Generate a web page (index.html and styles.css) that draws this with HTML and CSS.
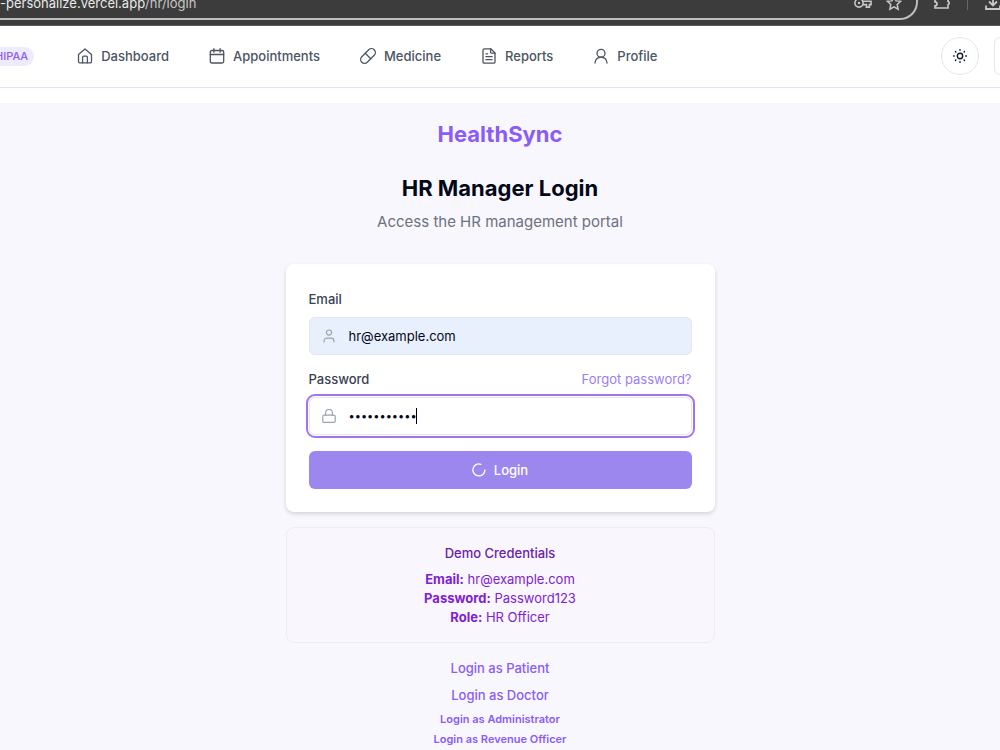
FILE: index.html
```html
<!DOCTYPE html>
<html lang="en">
<head>
  <meta charset="UTF-8" />
  <meta name="viewport" content="width=device-width, initial-scale=1.0" />
  <title>HealthSync - HR Manager Login</title>
  <link rel="stylesheet" href="styles.css">
</head>
<body>
  <!-- browser toolbar -->
  <div class="browser-bar">
    <div class="address">
      <span class="url"><b>-personalize.vercel.app</b>/hr/login</span>
      <span class="address-icons">
        <svg width="18" height="18" viewBox="0 0 18 18" fill="none" stroke="#c7c7c7" stroke-width="1.6"><circle cx="5" cy="9" r="4.1"/><circle cx="5" cy="9" r="1.2" fill="#c7c7c7" stroke="none"/><path d="M8.6 7.2h8.4v3.4h-1.600v2.500h-3v-2.500H8.800"/></svg>
        <svg width="16" height="16" viewBox="0 0 16 16" fill="none" stroke="#c7c7c7" stroke-width="1.500"><path d="M8 1.500l2 4.300 4.600.5-3.400 3.200.9 4.700L8 11.900l-4.100 2.300.9-4.700L1.400 6.300 6 5.800z"/></svg>
      </span>
    </div>
    <div class="browser-tools">
      <svg width="18" height="18" viewBox="0 0 18 18" fill="none" stroke="#c7c7c7" stroke-width="1.700"><path d="M2 4h4.200a1.700 1.700 0 0 1 3.400 0H15v3.400a1.800 1.800 0 0 1 0 3.400V14H2v-2.200a2 2 0 0 0 0-4z"/></svg>
      <span class="divider"></span>
      <svg width="18" height="18" viewBox="0 0 18 18" fill="none" stroke="#c7c7c7" stroke-width="1.800"><path d="M9 1v10M5 7.500l4 4 4-4M2 11.500V15h14v-3.500"/></svg>
    </div>
  </div>

  <header class="header">
    <span class="badge">HIPAA</span>
    <nav class="nav">
      <a href="#">
        <svg class="icon" viewBox="0 0 16 16"><path d="M1.500 6.500L8 1l6.500 5.500V13.500a1.300 1.300 0 0 1-1.300 1.300H2.800a1.300 1.300 0 0 1-1.300-1.300z"/><path d="M5.600 14.800V9.200a1 1 0 0 1 1-1h2.800a1 1 0 0 1 1 1v5.600"/></svg>
        Dashboard
      </a>
      <a href="#">
        <svg class="icon" viewBox="0 0 16 16"><rect x="1.300" y="2.500" width="13.400" height="12.500" rx="1.500"/><path d="M4.900.6v3.600M11.100.6v3.600M1.300 6.500h13.400"/></svg>
        Appointments
      </a>
      <a href="#">
        <svg class="icon" viewBox="0 0 16 16"><g transform="rotate(-45 8 8)"><rect x="-.8" y="4.100" width="17.600" height="7.800" rx="3.900"/><path d="M8 4.100v7.800"/></g></svg>
        Medicine
      </a>
      <a href="#">
        <svg class="icon" viewBox="0 0 16 16"><path d="M9.800.8H3.300A1.300 1.300 0 0 0 2 2.100v11.800a1.300 1.300 0 0 0 1.300 1.300h9.400a1.300 1.300 0 0 0 1.300-1.300V5z"/><path d="M9.600.8v3.200a1.200 1.200 0 0 0 1.200 1.200H14M4.900 5.800h1.700M4.900 8.700h6.200M4.900 11.600h6.200"/></svg>
        Reports
      </a>
      <a href="#">
        <svg class="icon" viewBox="0 0 16 16"><circle cx="8" cy="5.300" r="4"/><path d="M2 15a6 6 0 0 1 12 0"/></svg>
        Profile
      </a>
    </nav>
    <div class="header-actions">
      <button class="theme-toggle" type="button" aria-label="Toggle theme">
        <svg width="16" height="16" viewBox="0 0 16 16" fill="none" stroke="#111827" stroke-width="1.400" stroke-linecap="round"><circle cx="8" cy="8" r="2.700"/><path d="M8 1.600v.6M8 13.800v.6M1.600 8h.6M13.800 8h.6M3.500 3.500l.4.4M12.100 12.100l.4.4M3.500 12.500l.4-.4M12.100 3.900l.4-.4"/></svg>
      </button>
      <button class="menu-button" type="button" aria-label="Open menu"></button>
    </div>
  </header>

  <main class="page">
    <div class="brand">HealthSync</div>
    <h1>HR Manager Login</h1>
    <p class="subtitle">Access the HR management portal</p>

    <form class="card">
      <div class="label-row">
        <label for="email">Email</label>
      </div>
      <div class="field">
        <svg class="field-icon" viewBox="0 0 14 14"><circle cx="7" cy="3.600" r="2.600"/><path d="M2 13v-.8a3 3 0 0 1 3-3h4a3 3 0 0 1 3 3v.8"/></svg>
        <input class="filled" id="email" type="email" value="hr@example.com">
      </div>
      <div class="label-row">
        <label for="password">Password</label>
        <a href="#">Forgot password?</a>
      </div>
      <div class="field">
        <svg class="field-icon" viewBox="0 0 14 14"><rect x=".8" y="6.200" width="12.400" height="7.200" rx="1.300"/><path d="M3.600 6.200V3.800a3.400 3.400 0 0 1 6.800 0v2.400"/></svg>
        <input class="active" id="password" type="password" value="Password123">
        <span class="caret"></span>
      </div>
      <button class="login" type="button">
        <svg width="14" height="14" viewBox="0 0 14 14" fill="none" stroke="#fff" stroke-width="1.300" stroke-linecap="round"><path d="M12.900 7A6 6 0 1 1 8.900 1.300"/></svg>
        Login
      </button>
    </form>

    <section class="demo">
      <h2>Demo Credentials</h2>
      <p><strong>Email:</strong> hr@example.com</p>
      <p><strong>Password:</strong> Password123</p>
      <p><strong>Role:</strong> HR Officer</p>
    </section>

    <div class="links">
      <a href="#">Login as Patient</a>
      <a href="#">Login as Doctor</a>
      <a class="small" href="#">Login as Administrator</a>
      <a class="small" href="#">Login as Revenue Officer</a>
    </div>
  </main>
</body>
</html>
```
FILE: styles.css
```css
* { box-sizing: border-box; }
html { overflow: hidden; }
body { margin: 0; background: #fff; font-family: Inter, "Liberation Sans", sans-serif; font-size: 13px; color: #030817; }
a { color: inherit; text-decoration: none; }
h1, h2, p { margin: 0; }
button, input { font-family: inherit; }

.browser-bar { display: flex; height: 26px; background: #3c3c3c; border-bottom: 1px solid #5c5c5c; overflow: hidden; }
.address { flex: 1; display: flex; justify-content: space-between; height: 20px; border: solid #b9bec3; border-width: 0 2px 2px 0; border-bottom-right-radius: 18px; }
.url { font-size: 13px; line-height: 6px; color: #c7c7c7; }
.url b { font-weight: 400; color: #e8e8e8; }
.address-icons { display: flex; align-items: center; gap: 14px; height: 6px; padding-right: 14px; }
.browser-tools { display: flex; align-items: center; height: 6px; padding-left: 15px; margin-right: -2px; }
.browser-tools svg { flex: none; }
.divider { width: 1px; height: 14px; margin: 0 16px; background: #666; }

.header { display: flex; align-items: center; height: 62px; padding-bottom: 1px; border-bottom: 1px solid #e2e1f4; overflow: hidden; }
.badge { margin-left: -13px; padding: 0 6px 0 8px; border-radius: 10px; background: #efebfe; color: #8b5cf6; font-size: 11px; font-weight: 500; line-height: 19px; }
.nav { display: flex; gap: 40px; margin-left: 43px; color: #4b5563; font-weight: 500; }
.nav a { display: flex; align-items: center; gap: 8px; }
.icon { width: 16px; height: 16px; fill: none; stroke: #4b5563; stroke-width: 1.3; stroke-linecap: round; stroke-linejoin: round; overflow: visible; }
.header-actions { display: flex; gap: 15px; margin-left: auto; margin-right: -32px; }
.theme-toggle, .menu-button { width: 38px; height: 38px; padding: 0; border: 1px solid #e5e7eb; background: #fff; }
.theme-toggle { display: flex; align-items: center; justify-content: center; border-radius: 50%; }
.menu-button { border-radius: 6px; }

.page { display: flex; flex-direction: column; align-items: center; min-height: 647px; margin-top: 15px; padding: 15px 16px 0; background: #f8f7fe; }
.brand { font-size: 22px; font-weight: 700; line-height: 32px; color: #8b5cf6; }
h1 { margin-top: 22px; font-size: 22px; font-weight: 700; line-height: 32px; }
.subtitle { margin-top: 6px; font-size: 15px; line-height: 24px; color: #6b7280; }

.card { width: 100%; max-width: 429px; margin-top: 30px; padding: 23px; border-radius: 8px; background: #fff; box-shadow: 0 2px 4px rgba(0, 0, 0, .14); }
.label-row { display: flex; justify-content: space-between; margin-bottom: 5px; line-height: 25px; font-weight: 500; color: #374151; }
.label-row a { font-weight: 400; color: #9b7ff0; }
.field { position: relative; margin-bottom: 12px; }
.field input { display: block; width: 100%; height: 38px; padding: 0 12px 0 39px; border: 1px solid #e2e8f0; border-radius: 6px; background: #fff; color: #030817; font-size: 13px; outline: none; }
.field input.filled { background: #e8f0fe; }
.field input.active { font-size: 11px; outline: 2px solid #a472ec; outline-offset: 1px; }
.field-icon { position: absolute; left: 13px; top: 12px; width: 14px; height: 14px; fill: none; stroke: #9ca3af; stroke-width: 1.2; stroke-linecap: round; stroke-linejoin: round; }
.caret { position: absolute; left: 107px; top: 11px; width: 1px; height: 16px; background: #000; }
.login { display: flex; align-items: center; justify-content: center; gap: 8px; width: 100%; height: 38px; margin-top: 16px; border: none; border-radius: 6px; background: #9b87ee; color: #fff; font-size: 13px; font-weight: 500; }

.demo { width: 100%; max-width: 429px; margin-top: 15px; padding: 15px; border: 1px solid #eeeaf9; border-radius: 8px; background: #f9f6fe; color: #7e22ce; line-height: 19px; text-align: center; }
.demo h2 { margin-bottom: 7px; font-size: 13px; font-weight: 500; line-height: 20px; color: #6b21a8; }

.links { display: flex; flex-direction: column; align-items: center; margin-top: 12px; font-weight: 500; line-height: 27px; color: #8b5cf6; }
.links .small { font-size: 11px; font-weight: 600; line-height: 20px; }
```
